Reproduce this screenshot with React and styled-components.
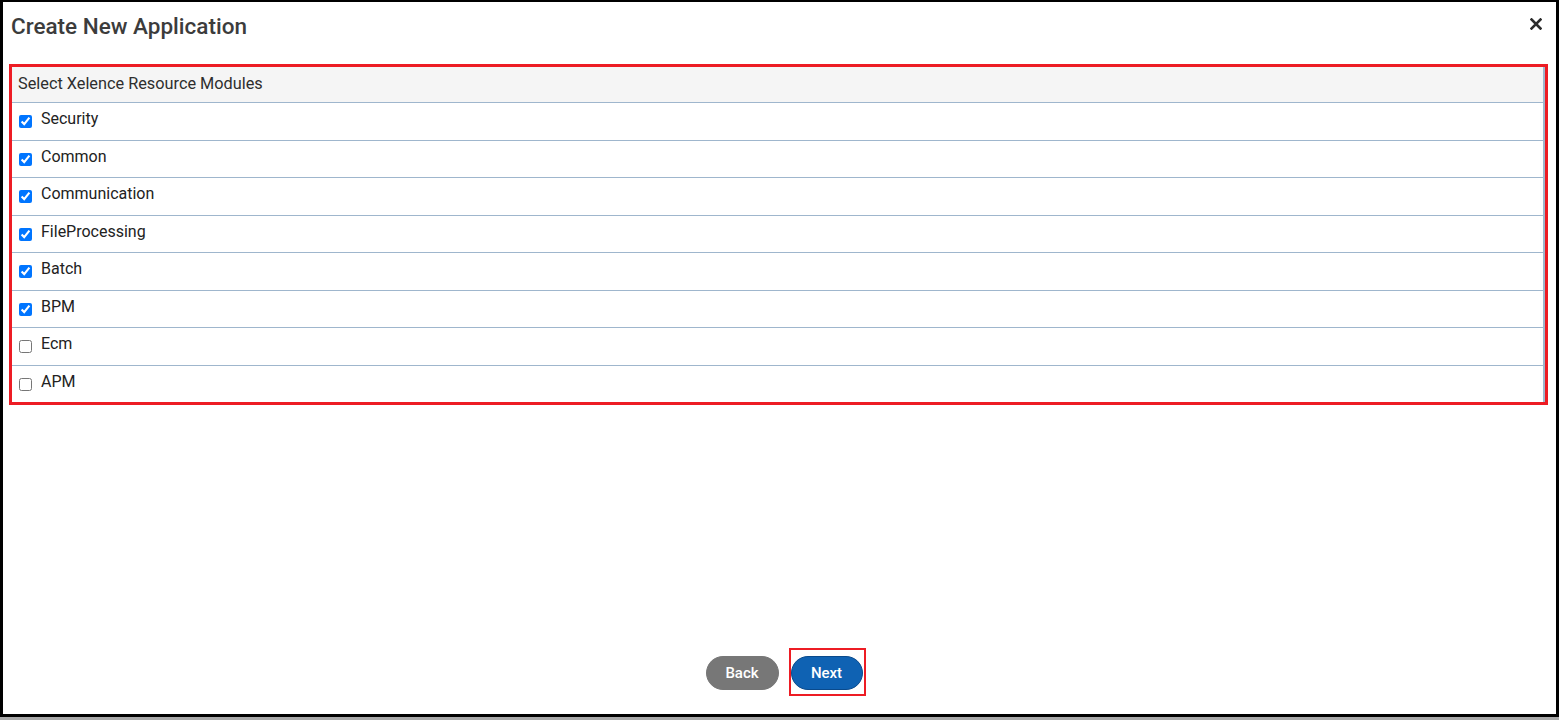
import React, { useState } from "react";
import styled, { createGlobalStyle } from "styled-components";

const GlobalStyle = createGlobalStyle`
  html, body { margin: 0; padding: 0; background: #a8a8a8; }
  body { font-family: Roboto, "Liberation Sans", sans-serif; }
  * { box-sizing: border-box; }
`;

const Frame = styled.div`
  width: 1559px;
  height: 717px;
  background: #fff;
  border-style: solid;
  border-color: #000;
  border-width: 2px 3px 3px 3px;
  display: flex;
  flex-direction: column;
`;

const Header = styled.div`
  height: 62px;
  display: flex;
  align-items: flex-start;
  justify-content: space-between;
  padding: 11px 14px 0 8px;
`;

const Title = styled.h1`
  margin: 0;
  font-size: 22.5px;
  line-height: 26px;
  font-weight: 500;
  color: #3c3c3c;
`;

const CloseButton = styled.button`
  border: 0;
  background: none;
  padding: 0;
  margin-top: 5px;
  width: 12px;
  height: 12px;
  cursor: pointer;
  display: flex;
`;

const Highlight = styled.div`
  margin: 0 8px 0 6px;
  border: 3px solid #ed1c24;
`;

const Table = styled.div`
  border-right: 2px solid #9fb6cd;
  display: flex;
  flex-direction: column;
`;

const HeadRow = styled.div`
  height: 35px;
  background: #f5f5f5;
  padding: 8px 6px 0;
  font-size: 16.3px;
  line-height: 18px;
  color: #2e2e2e;
  font-weight: 400;
`;

const Row = styled.label`
  height: ${(p) => p.$h}px;
  border-top: 1px solid #9fb6cd;
  display: flex;
  align-items: flex-start;
  padding-left: 7px;
  cursor: pointer;
`;

const Check = styled.input`
  margin: 12px 9px 0 0;
  width: 13px;
  height: 13px;
`;

const Label = styled.span`
  margin-top: 7px;
  font-size: 16px;
  line-height: 18px;
  color: #222;
`;

const Spacer = styled.div`
  flex: 1;
`;

const Footer = styled.div`
  display: flex;
  justify-content: center;
  align-items: flex-end;
  gap: 10px;
  padding: 0 0 24px 12px;
`;

const Pill = styled.button`
  height: 34px;
  border-radius: 17px;
  font-family: Roboto, "Liberation Sans", sans-serif;
  font-size: 15px;
  font-weight: 500;
  color: #fff;
  padding: 0;
  width: ${(p) => p.$w}px;
  background: ${(p) => (p.$primary ? "#0f62b3" : "#777777")};
  border: 1px solid ${(p) => (p.$primary ? "#0a4a8c" : "#777777")};
  cursor: pointer;
`;

const NextMark = styled.div`
  border: 2px solid #ed1c24;
  padding: 6px 1px 4px 0;
  margin-bottom: -6px;
`;

const modules = [
  ["Security", true],
  ["Common", true],
  ["Communication", true],
  ["FileProcessing", true],
  ["Batch", true],
  ["BPM", true],
  ["Ecm", false],
  ["APM", false],
];

export default function App() {
  const [checked, setChecked] = useState(modules.map((m) => m[1]));
  return (
    <>
      <GlobalStyle />
      <Frame>
        <Header>
          <Title>Create New Application</Title>
          <CloseButton aria-label="Close">
            <svg width="12" height="12" viewBox="0 0 12 12">
              <path d="M1.5 1.5 L10.5 10.5 M10.5 1.5 L1.5 10.5" stroke="#2b2b2b" strokeWidth="2.6" strokeLinecap="square" />
            </svg>
          </CloseButton>
        </Header>
        <Highlight>
          <Table>
            <HeadRow>Select Xelence Resource Modules</HeadRow>
            {modules.map(([name], i) => (
              <Row key={name} $h={i % 2 === 0 ? 38 : 37}>
                <Check
                  type="checkbox"
                  checked={checked[i]}
                  onChange={() => setChecked((c) => c.map((v, j) => (j === i ? !v : v)))}
                />
                <Label>{name}</Label>
              </Row>
            ))}
          </Table>
        </Highlight>
        <Spacer />
        <Footer>
          <Pill $w={73}>Back</Pill>
          <NextMark>
            <Pill $w={72} $primary>Next</Pill>
          </NextMark>
        </Footer>
      </Frame>
    </>
  );
}
